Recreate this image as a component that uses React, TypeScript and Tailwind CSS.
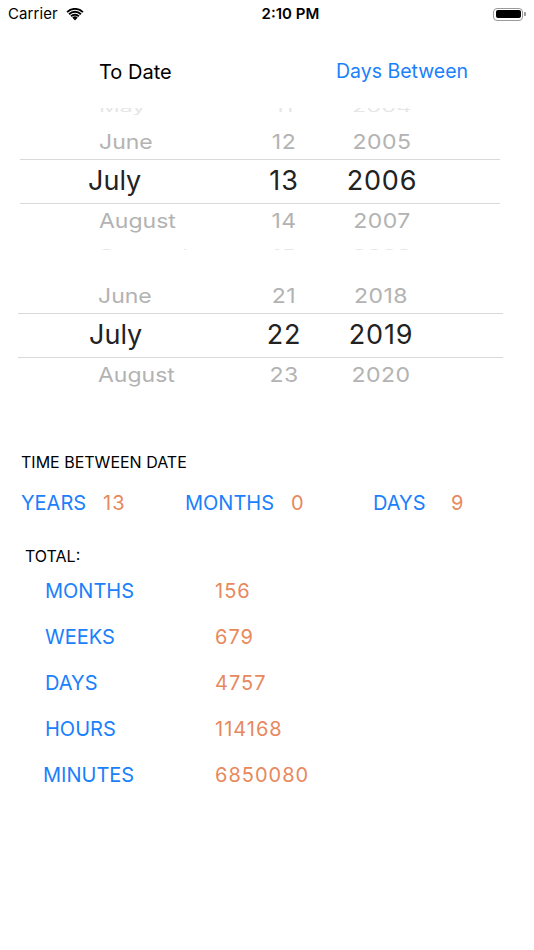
import React from "react";

type Row = { m: string; d: string; y: string };

function WifiIcon() {
  return (
    <svg width="18" height="13" viewBox="0 0 18 13" className="block">
      <path d="M9 12.6 L6.3 9.6 A3.9 3.9 0 0 1 11.7 9.6 Z" fill="#000" />
      <path d="M4.4 7.6 A6.6 6.6 0 0 1 13.6 7.6 L12.3 9.0 A4.7 4.7 0 0 0 5.7 9.0 Z" fill="#000" />
      <path d="M2.4 5.5 A9.5 9.5 0 0 1 15.6 5.5 L14.3 6.9 A7.6 7.6 0 0 0 3.7 6.9 Z" fill="#000" />
      <path d="M0.4 3.4 A12.4 12.4 0 0 1 17.6 3.4 L16.3 4.8 A10.5 10.5 0 0 0 1.7 4.8 Z" fill="#000" />
    </svg>
  );
}

function Battery() {
  return (
    <div className="flex items-center">
      <div className="w-[30px] h-[13px] rounded-[4px] border border-[#9a9a9a] p-[1.5px]">
        <div className="w-full h-full rounded-[2px] bg-black" />
      </div>
      <div className="w-[2px] h-[4px] rounded-r-[1px] bg-[#9a9a9a] ml-[1px]" />
    </div>
  );
}

function Picker({
  rowsAbove,
  selected,
  rowsBelow,
  height,
  offsetTop,
  widthClass,
  monthSelPad,
  monthPad,
  yearLeft,
}: {
  rowsAbove: { r: Row; fade: number }[];
  selected: Row;
  rowsBelow: { r: Row; fade: number }[];
  height: string;
  offsetTop: string;
  widthClass: string;
  monthSelPad: string;
  monthPad: string;
  yearLeft: string;
}) {
  const faded = (r: Row, fade: number, key: string) => (
    <div
      key={key}
      className={`flex items-center h-[34px] text-[23px] ${fade === 1 ? "text-[#b3b3b3] scale-y-[0.88]" : "text-[#e6e6e6] scale-y-[0.55]"}`}
    >
      <div className={`${monthPad} shrink-0`}>{r.m}</div>
      <div className="w-[60px] text-center shrink-0 tracking-[0.5px]">{r.d}</div>
      <div className={`${yearLeft} w-[100px] text-center shrink-0 tracking-[0.5px]`}>{r.y}</div>
    </div>
  );
  return (
    <div className={`${height} overflow-hidden`}>
      <div className={`${widthClass} ${offsetTop}`}>
        {rowsAbove.map((x, i) => faded(x.r, x.fade, "a" + i))}
        <div className="flex items-center h-[45px] border-y border-[#d9d9d9] text-[27px] text-[#222]">
          <div className={`${monthSelPad} shrink-0`}>{selected.m}</div>
          <div className="w-[60px] text-center shrink-0 tracking-[0.8px]">{selected.d}</div>
          <div className={`${yearLeft} w-[100px] text-center shrink-0 tracking-[0.8px]`}>{selected.y}</div>
        </div>
        {rowsBelow.map((x, i) => faded(x.r, x.fade, "b" + i))}
      </div>
    </div>
  );
}

export default function App() {
  const blue = "text-[#1a80fb]";
  const orange = "text-[#e7895d] tracking-[1px]";
  const totals = [
    ["MONTHS", "156", "pl-[45px]"],
    ["WEEKS", "679", "pl-[45px]"],
    ["DAYS", "4757", "pl-[45px]"],
    ["HOURS", "114168", "pl-[45px]"],
    ["MINUTES", "6850080", "pl-[43px]"],
  ];
  return (
    <div className="w-[534px] h-[950px] bg-white overflow-hidden font-['Inter','Liberation_Sans',sans-serif] text-black">
      {/* status bar */}
      <div className="h-[28px] flex items-center px-[8px] relative">
        <div className="flex items-center gap-[8px]">
          <span className="text-[15px] tracking-[0.1px]">Carrier</span>
          <WifiIcon />
        </div>
        <div className="flex-1 text-center text-[15px] font-semibold pl-[4px]">2:10 PM</div>
        <div>
          <Battery />
        </div>
      </div>

      {/* header */}
      <div className="h-[80px] pt-[8px] flex items-center">
        <div className="pl-[99px] w-[336px] text-[20px] text-black">To Date</div>
        <div className={`text-[19.5px] ${blue}`}>Days Between</div>
      </div>

      {/* picker 1 */}
      <Picker
        height="h-[142px]"
        offsetTop="-mt-[17px] ml-[20px]"
        widthClass="w-[480px]"
        monthSelPad="pl-[68px] w-[234px]"
        monthPad="pl-[79px] w-[234px]"
        yearLeft="ml-[18px]"
        rowsAbove={[
          { r: { m: "May", d: "11", y: "2004" }, fade: 2 },
          { r: { m: "June", d: "12", y: "2005" }, fade: 1 },
        ]}
        selected={{ m: "July", d: "13", y: "2006" }}
        rowsBelow={[
          { r: { m: "August", d: "14", y: "2007" }, fade: 1 },
          { r: { m: "September", d: "15", y: "2008" }, fade: 2 },
        ]}
      />

      <div className="h-[29px]" />

      {/* picker 2 */}
      <Picker
        height="h-[113px]"
        offsetTop="ml-[18px]"
        widthClass="w-[485px]"
        monthSelPad="pl-[71px] w-[236px]"
        monthPad="pl-[80px] w-[236px]"
        yearLeft="ml-[17px]"
        rowsAbove={[{ r: { m: "June", d: "21", y: "2018" }, fade: 1 }]}
        selected={{ m: "July", d: "22", y: "2019" }}
        rowsBelow={[{ r: { m: "August", d: "23", y: "2020" }, fade: 1 }]}
      />

      {/* time between */}
      <div className="mt-[60px] pl-[21px] h-[20px] leading-[20px] text-[16px] text-black">
        TIME BETWEEN DATE
      </div>
      <div className="mt-[19px] h-[24px] leading-[24px] flex text-[20px] pl-[21px]">
        <div className="flex w-[164px]">
          <span className={`w-[82px] ${blue}`}>YEARS</span>
          <span className={orange}>13</span>
        </div>
        <div className="flex w-[188px]">
          <span className={`w-[106px] ${blue}`}>MONTHS</span>
          <span className={orange}>0</span>
        </div>
        <div className="flex">
          <span className={`w-[78px] ${blue}`}>DAYS</span>
          <span className={orange}>9</span>
        </div>
      </div>

      <div className="mt-[31px] pl-[25px] h-[20px] leading-[20px] text-[16px] text-black">TOTAL:</div>
      <div className="mt-[2px] flex flex-col">
        {totals.map(([l, v, p]) => (
          <div key={l} className={`h-[46px] flex items-center text-[20px] ${p}`}>
            <span className={`${l === "MINUTES" ? "w-[172px]" : "w-[170px]"} ${blue}`}>{l}</span>
            <span className={orange}>{v}</span>
          </div>
        ))}
      </div>
    </div>
  );
}
